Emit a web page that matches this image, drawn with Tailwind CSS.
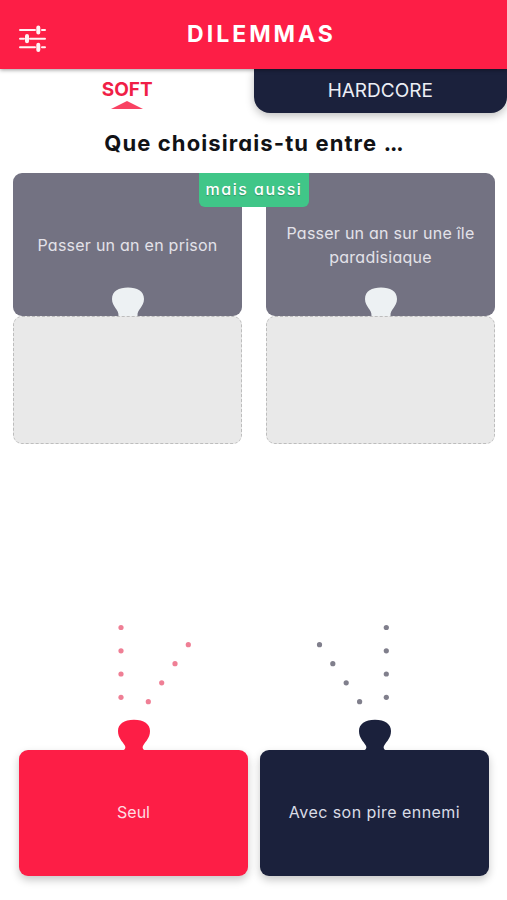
<!DOCTYPE html>
<html lang="fr">
<head>
    <meta charset="UTF-8">
    <meta name="viewport" content="width=device-width, initial-scale=1.0">
    <title>Dilemmas</title>
    <script src="https://cdn.jsdelivr.net/npm/@tailwindcss/browser@4"></script>
</head>
<body class="bg-white font-['Inter',sans-serif] [font-feature-settings:'cv11'] overflow-hidden">
    <div class="w-[507px] h-[900px] flex flex-col">
        <!-- Header -->
        <header class="relative z-10 h-[69px] shrink-0 bg-[#fd1e46] grid grid-cols-[80px_1fr_64px] items-center shadow-[0_1px_4px_rgba(0,0,0,0.4)]">
            <button class="pl-[19px] pt-2" aria-label="Options">
                <svg class="w-7 h-7" viewBox="0 0 28 28" fill="none" stroke="#fff2f4" stroke-linecap="round">
                    <path stroke-width="2" d="M1 5h15M23 5h3M1 13.700h4M11 13.700h15M1 22.300h15M23 22.300h3"/>
                    <path stroke-width="4" d="M19.300 2.400v5.200M8 11.100v5.200M19.300 19.700v5.200"/>
                </svg>
            </button>
            <h1 class="text-center text-white text-[23px] leading-[69px] font-bold tracking-[3px]">DILEMMAS</h1>
        </header>

        <!-- Tabs -->
        <nav class="h-11 shrink-0 grid grid-cols-2">
            <button class="flex flex-col items-center pt-2.5 text-[#f01f47]">
                <span class="pl-px text-[19px] leading-[22px] font-bold">SOFT</span>
                <svg class="w-8 h-2 ml-px" viewBox="0 0 32 8"><path fill="#f94263" d="M0 8L16 0l16 8z"/></svg>
            </button>
            <button class="bg-[#1b213c] rounded-b-2xl text-[#eceef5] text-[19px] leading-[44px] shadow-[0_3px_9px_rgba(0,0,0,0.25)]">HARDCORE</button>
        </nav>

        <h2 class="h-[60px] shrink-0 text-center text-[#111216] text-[22px] leading-[61px] font-bold tracking-[1.1px]">Que choisirais-tu entre <span class="tracking-[-1px]">...</span></h2>

        <!-- Choices -->
        <main class="relative grid grid-cols-2 gap-6 pl-[13px] pr-3">
            <section>
                <div class="relative h-[143px] rounded-[9px] bg-[#737282] px-3 flex items-center justify-center">
                    <p class="text-center text-[#e3e2e9] text-base leading-6 tracking-[0.25px]">Passer un an en prison</p>
                    <svg class="absolute bottom-0 left-[98px] w-[34px] h-[29px]" viewBox="0 0 34 29"><path fill="#edf1f3" d="M7.500 29C8 22 1 20 1 12 1 4 8 .5 17 .5S33 4 33 12c0 8-7 10-6.500 17z"/></svg>
                </div>
                <div class="h-32 rounded-[9px] border border-dashed border-[#bdbdbd] bg-[#e9e9e9]"></div>
            </section>
            <section>
                <div class="relative h-[143px] rounded-[9px] bg-[#737282] px-3 flex items-center justify-center">
                    <p class="text-center text-[#e3e2e9] text-base leading-6 tracking-[0.25px]">Passer un an sur une île<br>paradisiaque</p>
                    <svg class="absolute bottom-0 left-[98px] w-[34px] h-[29px]" viewBox="0 0 34 29"><path fill="#edf1f3" d="M7.500 29C8 22 1 20 1 12 1 4 8 .5 17 .5S33 4 33 12c0 8-7 10-6.500 17z"/></svg>
                </div>
                <div class="h-32 rounded-[9px] border border-dashed border-[#bdbdbd] bg-[#e9e9e9]"></div>
            </section>
            <div class="absolute top-0 left-[199px] w-[110px] h-[34px] rounded-b-md bg-[#40c688] text-white text-base leading-[33px] font-medium text-center whitespace-nowrap text-shadow-[0_1px_1px_rgba(0,0,0,0.25)]"><span class="tracking-[1.5px]">mais aussi</span></div>
        </main>

        <!-- Drag hints -->
        <svg class="mt-auto shrink-0 w-[507px] h-[99px]" viewBox="0 620 507 99">
            <g fill="#ef7f95">
                <circle cx="121" cy="627.5" r="2.6"/><circle cx="121" cy="650.8" r="2.6"/><circle cx="121" cy="674" r="2.6"/><circle cx="121" cy="697.3" r="2.6"/>
                <circle cx="188.3" cy="644.7" r="2.6"/><circle cx="175" cy="663.7" r="2.6"/><circle cx="161.7" cy="682.8" r="2.6"/><circle cx="148.3" cy="701.7" r="2.6"/>
            </g>
            <g fill="#807f8c">
                <circle cx="386.3" cy="627.5" r="2.6"/><circle cx="386.3" cy="650.8" r="2.6"/><circle cx="386.3" cy="674" r="2.6"/><circle cx="386.3" cy="697.3" r="2.6"/>
                <circle cx="319.5" cy="644.7" r="2.6"/><circle cx="332.8" cy="663.7" r="2.6"/><circle cx="346.2" cy="682.8" r="2.6"/><circle cx="359.6" cy="701.7" r="2.6"/>
            </g>
        </svg>

        <!-- Answers -->
        <footer class="grid grid-cols-2 gap-3 pl-[19px] pr-[18px] pb-6">
            <button class="flex flex-col items-center">
                <svg class="w-11 h-8 -mb-px relative" viewBox="0 0 44 32"><path fill="#fd1e46" d="M8 32c5-.4 6.500-3 4.500-6C10.500 22.500 6 19 6 12 6 5 12 .7 22 .7S38 5 38 12c0 7-4.500 10.500-6.500 14-2 3-.5 5.600 4.500 6z"/></svg>
                <span class="w-full h-[126px] rounded-[9px] bg-[#fd1e46] text-[#ffdce2] text-base leading-[125px] shadow-[0_4px_9px_rgba(0,0,0,0.22)]">Seul</span>
            </button>
            <button class="flex flex-col items-center">
                <svg class="w-11 h-8 -mb-px relative" viewBox="0 0 44 32"><path fill="#1b213c" d="M8 32c5-.4 6.500-3 4.500-6C10.500 22.500 6 19 6 12 6 5 12 .7 22 .7S38 5 38 12c0 7-4.500 10.500-6.500 14-2 3-.5 5.600 4.500 6z"/></svg>
                <span class="w-full h-[126px] rounded-[9px] bg-[#1b213c] text-[#d9dce6] text-base leading-[125px] tracking-[0.45px] shadow-[0_4px_9px_rgba(0,0,0,0.22)]">Avec son pire ennemi</span>
            </button>
        </footer>
    </div>
</body>
</html>
